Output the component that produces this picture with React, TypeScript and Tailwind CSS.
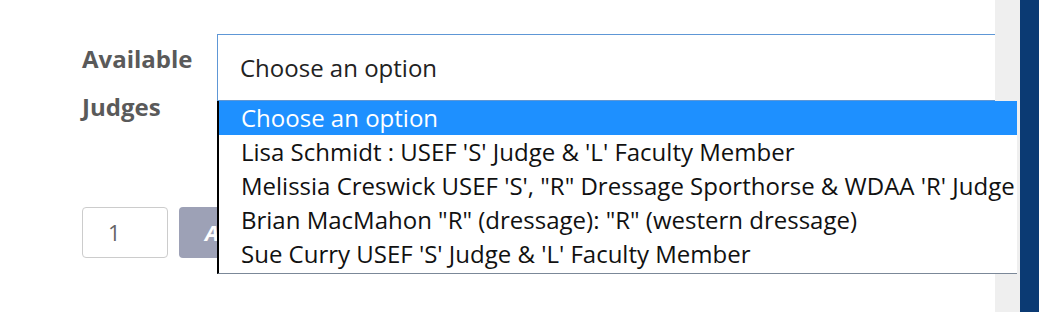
const options = [
  'Choose an option',
  "Lisa Schmidt : USEF 'S' Judge & 'L' Faculty Member",
  'Melissia Creswick USEF \'S\', "R" Dressage Sporthorse & WDAA \'R\' Judge',
  'Brian MacMahon "R" (dressage): "R" (western dressage)',
  "Sue Curry USEF 'S' Judge & 'L' Faculty Member",
];

export default function App() {
  return (
    <div className="relative flex h-[312px] w-full overflow-hidden bg-white font-['Open_Sans',sans-serif]">
      {/* main content */}
      <div className="flex-1 overflow-hidden pl-[82px] pt-[34px]">
        <div className="flex">
          <div className="w-[135px] pt-[1px] text-[24px] font-bold leading-[48px] text-[#5a5a5a]">
            Available
            <br />
            Judges
          </div>
          <div className="flex h-[67px] flex-1 items-center border-y border-l border-[#5e97d6] pl-[22px] text-[24px] text-[#222]">
            Choose an option
          </div>
        </div>

        <div className="mt-[76px] flex gap-[11px]">
          <div className="flex h-[51px] w-[86px] items-center rounded-[4px] border border-[#cccccc] pl-[25px] text-[22px] text-[#666]">
            1
          </div>
          <button className="h-[51px] rounded-[4px] bg-[#9da1b6] px-[26px] text-[22px] font-bold italic text-white">
            Add
          </button>
        </div>
      </div>

      {/* scrollbar track */}
      <div className="w-[25px] bg-[#efefef]" />
      {/* side panel */}
      <div className="w-[19px] bg-[#0b3a73]" />

      {/* open select list */}
      <ul className="absolute left-[217px] top-[101px] w-[800px] border-b border-l-2 border-b-[#7b8898] border-l-black bg-white pb-[2px]">
        {options.map((opt, i) => (
          <li
            key={opt}
            className={`h-[34px] whitespace-nowrap pl-[22px] text-[24px] leading-[34px] ${
              i === 0 ? 'bg-[#1e90ff] text-white' : 'text-[#111]'
            }`}
          >
            {opt}
          </li>
        ))}
      </ul>
    </div>
  );
}
